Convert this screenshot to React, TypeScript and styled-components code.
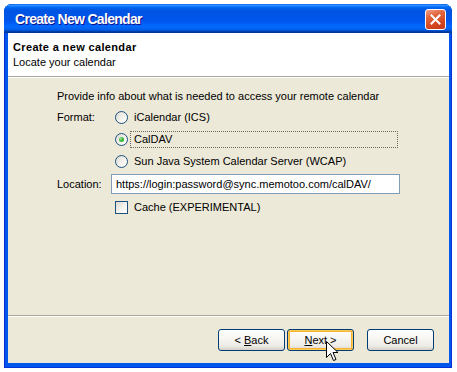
import React, { FC, ReactNode } from "react";
import styled, { createGlobalStyle, css } from "styled-components";

const GlobalStyle = createGlobalStyle`
	html, body {
		margin: 0;
		padding: 0;
		background: #ffffff;
	}
	body {
		font-family: "Liberation Sans", Arial, sans-serif;
		font-size: 11px;
		color: #000000;
	}
`;

const Window = styled.div`
	margin: 4px;
	width: 448px;
	height: 364px;
	display: flex;
	flex-direction: column;
	background: #0055ea;
	border-radius: 8px 8px 0 0;
	box-shadow: inset 0 0 0 1px #0831d9;
	overflow: hidden;
	position: relative;
`;

const TitleBar = styled.div`
	height: 29px;
	flex: none;
	display: flex;
	align-items: center;
	justify-content: space-between;
	padding: 0 6px 0 8px;
	background: linear-gradient(
		180deg,
		#0058ee 0%,
		#3593ff 4%,
		#288eff 6%,
		#127dff 8%,
		#036ffc 10%,
		#0262ee 14%,
		#0057e5 20%,
		#0054e3 24%,
		#0055eb 56%,
		#005bf5 66%,
		#026afe 76%,
		#0062ef 86%,
		#0052d6 92%,
		#0040ab 94%,
		#003092 100%
	);
`;

const Title = styled.span`
	font-size: 14px;
	font-weight: 700;
	letter-spacing: -0.7px;
	color: #ffffff;
	text-shadow: 1px 1px #0f1089;
	padding: 1px 0 0 3px;
`;

const CloseButton = styled.div`
	width: 19px;
	height: 19px;
	border: 1px solid #ffffff;
	border-radius: 3px;
	background: linear-gradient(160deg, #f0a088 0%, #e2683f 30%, #d4461f 70%, #c23a18 100%);
	display: flex;
	align-items: center;
	justify-content: center;
	margin-top: 2px;
`;

const Client = styled.div`
	flex: 1;
	margin: 0 3px 5px 4px;
	background: #ece9d8;
	display: flex;
	flex-direction: column;
	min-height: 0;
`;

const Header = styled.div`
	flex: none;
	height: 44px;
	box-sizing: border-box;
	background: #ffffff;
	border-bottom: 1px solid #aca899;
	padding: 7px 0 0 5px;
`;

const HeaderTitle = styled.div`
	font-weight: 700;
	letter-spacing: 0.35px;
	line-height: 14px;
`;

const HeaderSub = styled.div`
	line-height: 14px;
	margin-top: 1px;
`;

const Body = styled.div`
	flex: 1;
	padding: 12px 0 0 49px;
	box-shadow: inset 0 1px #ffffff;
`;

const Intro = styled.div`
	line-height: 14px;
	margin-bottom: 3px;
`;

const FormRow = styled.div<{ $align?: "start" | "center"; $top?: number }>`
	display: flex;
	align-items: ${(p) => (p.$align === "start" ? "flex-start" : "center")};
	width: 343px;
	margin-top: ${(p) => p.$top ?? 0}px;
`;

const FieldLabel = styled.div<{ $rowHeight?: number }>`
	width: 54px;
	flex: none;
	line-height: ${(p) => p.$rowHeight ?? 20}px;
`;

const FieldContent = styled.div`
	flex: 1;
	display: flex;
	flex-direction: column;
`;

const OptionRow = styled.div`
	height: 22px;
	display: flex;
	align-items: center;
	padding-left: 4px;
`;

const RadioCircle = styled.span<{ $checked?: boolean }>`
	width: 13px;
	height: 13px;
	box-sizing: border-box;
	flex: none;
	border-radius: 50%;
	border: 1px solid #1c5180;
	background: linear-gradient(135deg, #dcd9cf 0%, #f4f3ee 55%, #ffffff 100%);
	display: flex;
	align-items: center;
	justify-content: center;
	${(p) =>
		p.$checked &&
		css`
			&::after {
				content: "";
				width: 5px;
				height: 5px;
				border-radius: 50%;
				background: radial-gradient(circle at 35% 35%, #9ee29e 0%, #3cb93c 45%, #1d9a1d 100%);
			}
		`}
`;

const OptionText = styled.span<{ $focused?: boolean }>`
	margin-left: 2px;
	padding: 0 3px;
	line-height: 15px;
	border: 1px dotted transparent;
	${(p) =>
		p.$focused &&
		css`
			flex: 1;
			margin-right: 2px;
			border-color: #6d6a60;
		`}
`;

const TextInput = styled.div`
	height: 20px;
	box-sizing: border-box;
	border: 1px solid #7f9db9;
	background: #ffffff;
	padding-left: 4px;
	line-height: 18px;
	white-space: nowrap;
	overflow: hidden;
`;

const CheckRow = styled.div`
	height: 22px;
	display: flex;
	align-items: center;
	padding-left: 58px;
	margin-top: 2px;
`;

const CheckBox = styled.span`
	width: 13px;
	height: 13px;
	box-sizing: border-box;
	flex: none;
	border: 1px solid #1c5180;
	background: linear-gradient(135deg, #dcd9cf 0%, #f4f3ee 55%, #ffffff 100%);
`;

const CheckText = styled.span`
	margin-left: 6px;
	line-height: 14px;
`;

const Footer = styled.div`
	flex: none;
	border-top: 1px solid #aca899;
	box-shadow: inset 0 1px #ffffff;
	padding: 13px 15px 12px 0;
	display: flex;
	justify-content: flex-end;
`;

const Button = styled.div<{ $hot?: boolean; $gap?: number }>`
	width: 67px;
	height: 22px;
	box-sizing: border-box;
	margin-left: ${(p) => p.$gap ?? 0}px;
	border: 1px solid #003c74;
	border-radius: 3px;
	background: linear-gradient(180deg, #ffffff 0%, #f6f5f1 45%, #ecebe6 80%, #d6d0c5 100%);
	display: flex;
	align-items: center;
	justify-content: center;
	line-height: 14px;
	${(p) =>
		p.$hot &&
		css`
			box-shadow: inset 0 0 0 1px #fbca5b, inset 0 0 0 2px #f8b330;
		`}
	u {
		text-decoration: underline;
	}
`;

const Cursor = styled.svg`
	position: absolute;
	left: 322px;
	top: 337px;
`;

interface OptionProps {
	checked?: boolean;
	focused?: boolean;
	children: ReactNode;
}

const RadioOption: FC<OptionProps> = ({ checked, focused, children }) => (
	<OptionRow>
		<RadioCircle $checked={checked} />
		<OptionText $focused={focused}>{children}</OptionText>
	</OptionRow>
);

const App: FC = () => {
	return (
		<>
			<GlobalStyle />
			<Window>
				<TitleBar>
					<Title>Create New Calendar</Title>
					<CloseButton>
						<svg width="11" height="11" viewBox="0 0 11 11">
							<path d="M1.5 1.5 L9.5 9.5 M9.5 1.5 L1.5 9.5" stroke="#ffffff" strokeWidth="2" strokeLinecap="square" />
						</svg>
					</CloseButton>
				</TitleBar>
				<Client>
					<Header>
						<HeaderTitle>Create a new calendar</HeaderTitle>
						<HeaderSub>Locate your calendar</HeaderSub>
					</Header>
					<Body>
						<Intro>Provide info about what is needed to access your remote calendar</Intro>
						<FormRow $align="start">
							<FieldLabel $rowHeight={22}>Format:</FieldLabel>
							<FieldContent>
								<RadioOption>iCalendar (ICS)</RadioOption>
								<RadioOption checked focused>
									CalDAV
								</RadioOption>
								<RadioOption>Sun Java System Calendar Server (WCAP)</RadioOption>
							</FieldContent>
						</FormRow>
						<FormRow $top={2}>
							<FieldLabel>Location:</FieldLabel>
							<FieldContent>
								<TextInput>https://login:password@sync.memotoo.com/calDAV/</TextInput>
							</FieldContent>
						</FormRow>
						<CheckRow>
							<CheckBox />
							<CheckText>Cache (EXPERIMENTAL)</CheckText>
						</CheckRow>
					</Body>
					<Footer>
						<Button>
							&lt;&nbsp;<u>B</u>ack
						</Button>
						<Button $hot $gap={2}>
							<u>N</u>ext &gt;
						</Button>
						<Button $gap={13}>Cancel</Button>
					</Footer>
				</Client>
				<Cursor width="14" height="22" viewBox="0 0 14 22">
					<path
						d="M0.5 0.5 L0.5 16.5 L4.5 12.5 L7.5 19.5 L10 18.5 L7 11.5 L12 11.5 Z"
						fill="#ffffff"
						stroke="#000000"
						strokeWidth="1"
						strokeLinejoin="miter"
					/>
				</Cursor>
			</Window>
		</>
	);
};

export default App;
